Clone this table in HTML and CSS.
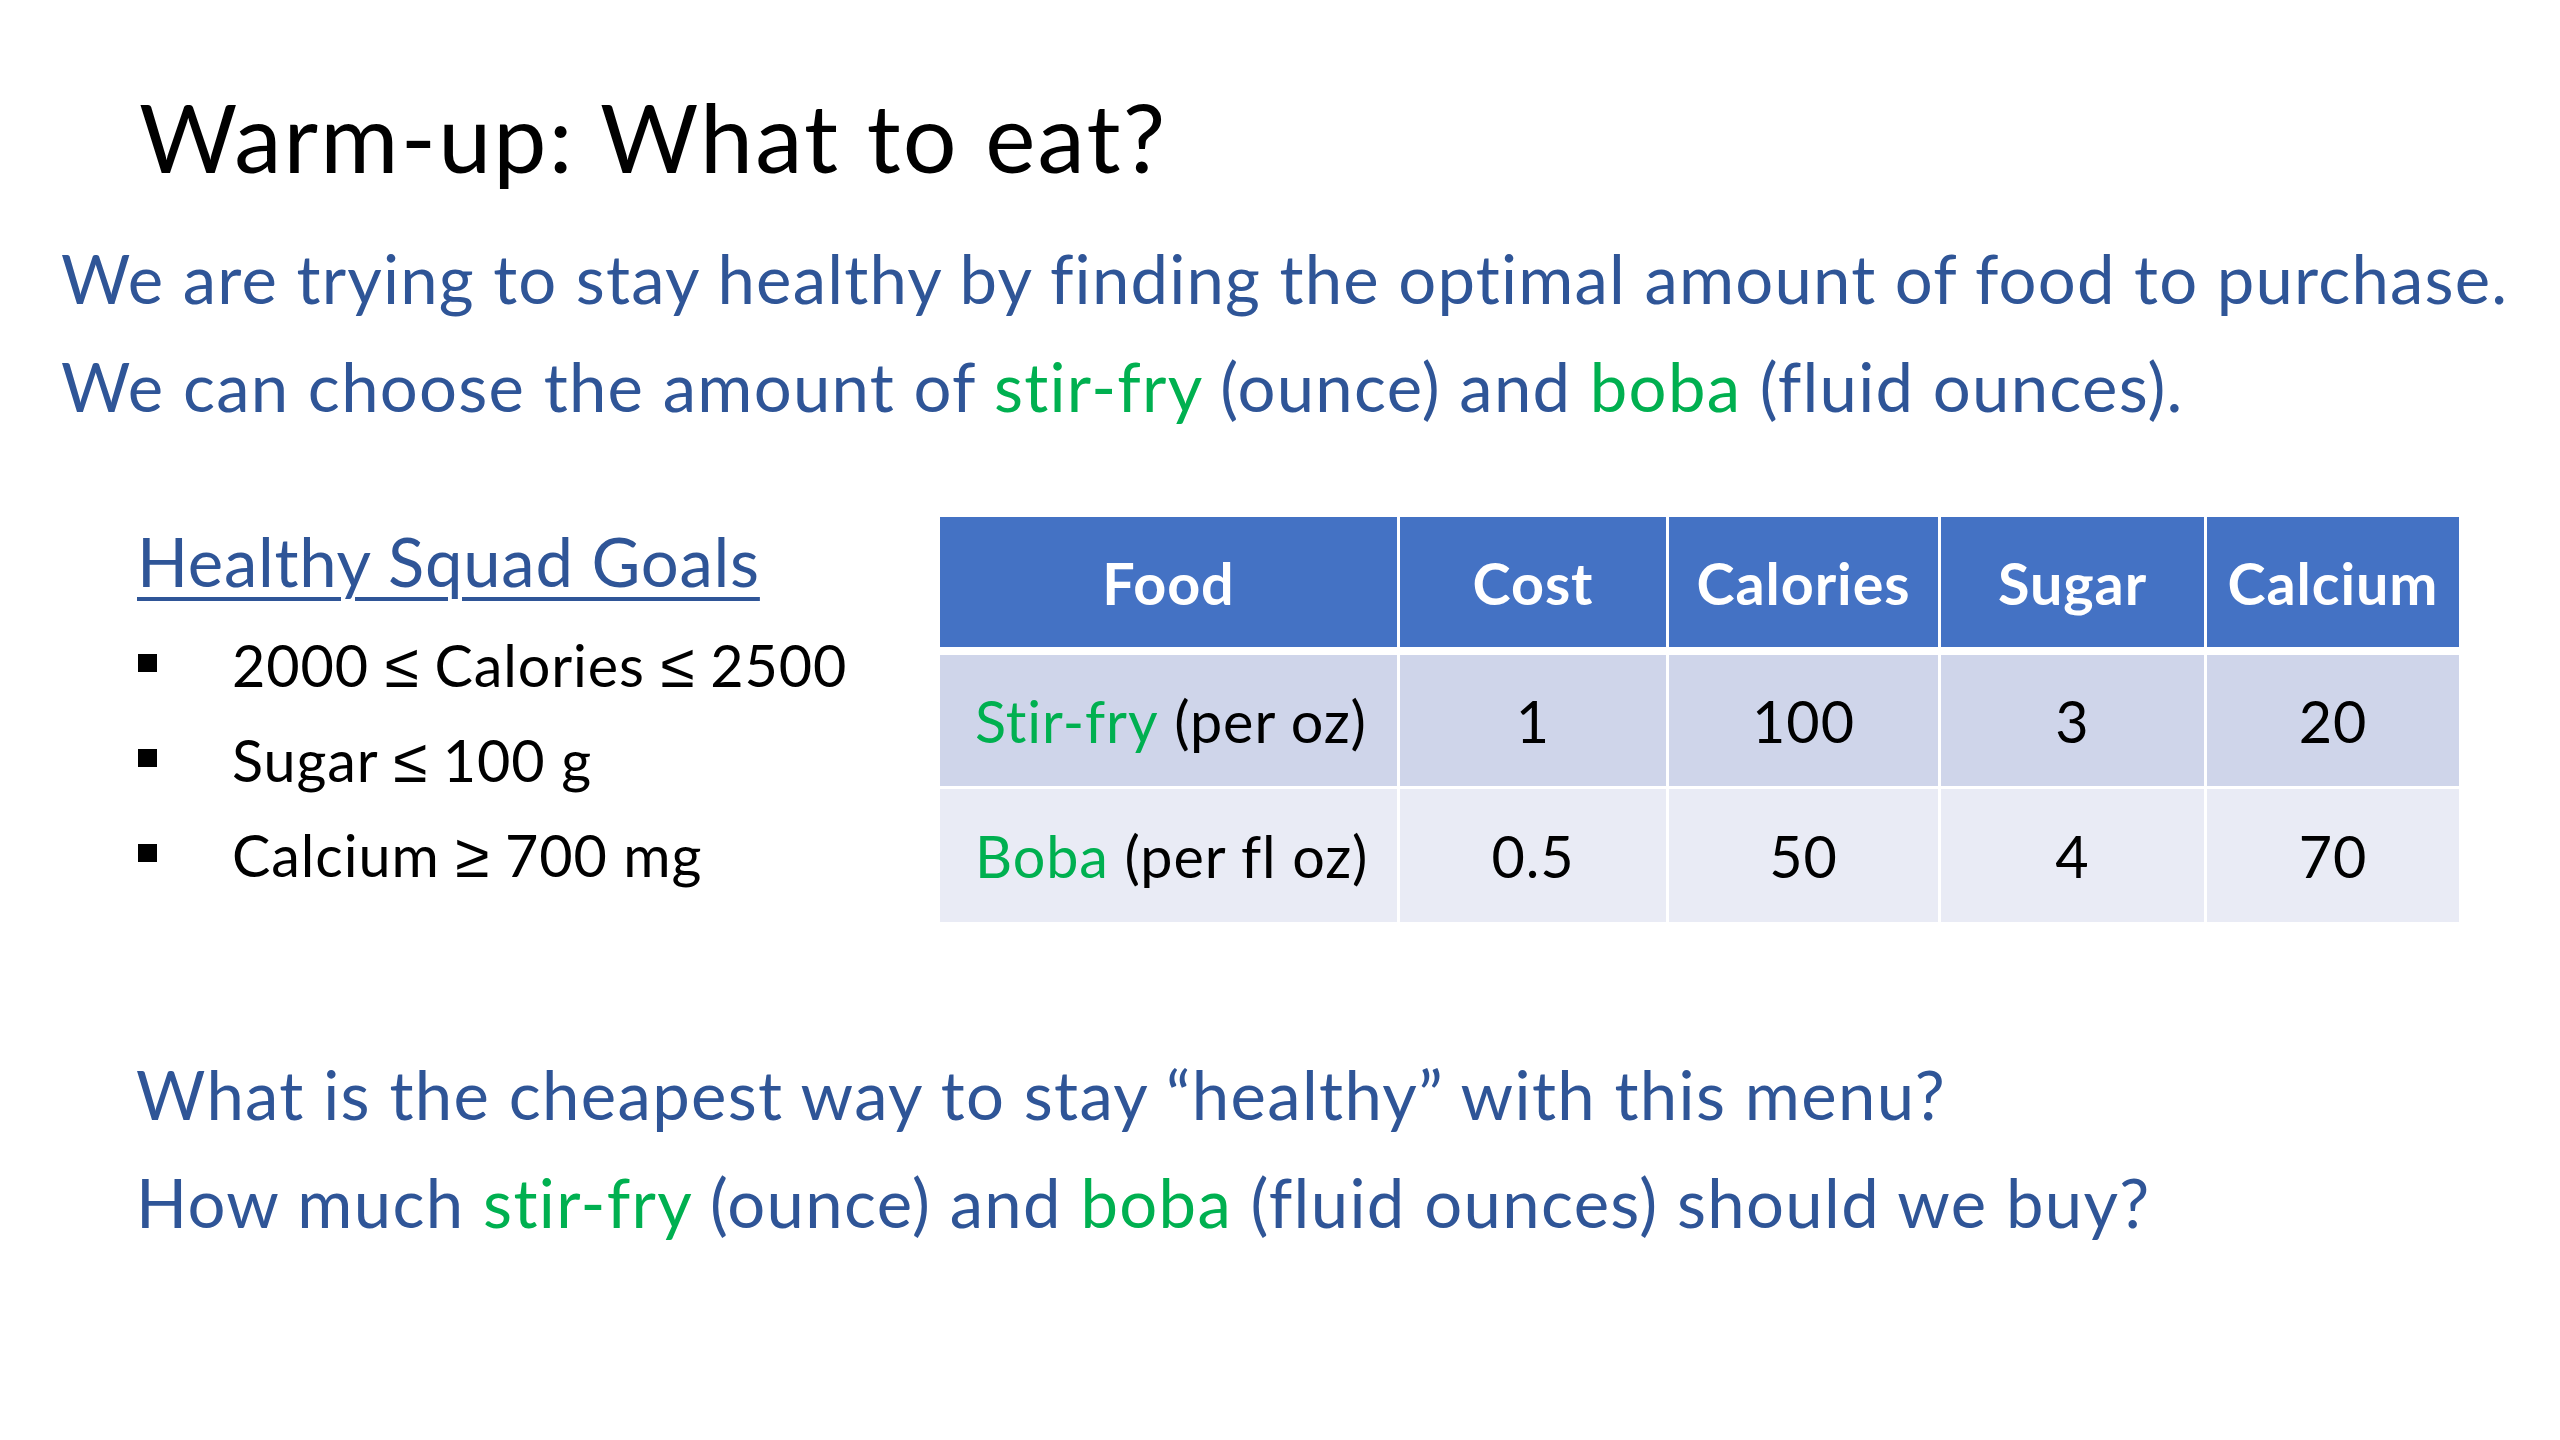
FILE: index.html
```html
<!DOCTYPE html>
<html lang="en">
<head>
<meta charset="utf-8">
<title>Warm-up: What to eat?</title>
<link rel="stylesheet" href="styles.css">
</head>
<body>
<div class="slide">
  <h1 class="title">Warm-up: What to eat?</h1>
  <div class="intro">
    <p class="l1">We are trying to stay healthy by finding the optimal amount of food to purchase.</p>
    <p>We can choose the amount of <span class="g">stir-fry</span> (ounce) and <span class="g">boba</span> (fluid ounces).</p>
  </div>
  <div class="middle">
    <div class="goals">
      <h2 class="goals-head">Healthy Squad Goals</h2>
      <ul class="goal-list">
        <li><span class="sq"></span><span>2000 <span class="op">≤</span> Calories <span class="op">≤</span> 2500</span></li>
        <li><span class="sq"></span><span>Sugar <span class="op">≤</span> 100 g</span></li>
        <li><span class="sq"></span><span>Calcium <span class="op">≥</span> 700 mg</span></li>
      </ul>
    </div>
    <div class="tbl">
      <div class="tr head">
        <div class="td">Food</div>
        <div class="td">Cost</div>
        <div class="td">Calories</div>
        <div class="td">Sugar</div>
        <div class="td">Calcium</div>
      </div>
      <div class="tr odd">
        <div class="td first"><span class="g">Stir-fry</span>&nbsp;(per oz)</div>
        <div class="td">1</div>
        <div class="td">100</div>
        <div class="td">3</div>
        <div class="td">20</div>
      </div>
      <div class="tr even">
        <div class="td first"><span class="g">Boba</span>&nbsp;(per fl oz)</div>
        <div class="td">0.5</div>
        <div class="td">50</div>
        <div class="td">4</div>
        <div class="td">70</div>
      </div>
    </div>
  </div>
  <div class="question">
    <p>What is the cheapest way to stay “healthy” with this menu?</p>
    <p>How much <span class="g">stir-fry</span> (ounce) and <span class="g">boba</span> (fluid ounces) should we buy?</p>
  </div>
</div>
</body>
</html>
```

FILE: styles.css
```css
* { box-sizing: border-box; }
html, body { margin: 0; padding: 0; background: #ffffff; }
body { font-family: Lato, "Open Sans", sans-serif; color: #000; }

.slide {
  width: 2560px;
  height: 1440px;
  overflow: hidden;
  background: #ffffff;
  padding-top: 76px;
}

.title {
  margin: 0;
  padding-left: 139px;
  font-size: 95px;
  font-weight: 400;
  line-height: 120px;
  letter-spacing: 0.023em;
  color: #000;
}

.intro {
  margin-top: 28px;
  padding-left: 61px;
  color: #2f5597;
  font-size: 67px;
  line-height: 108px;
  letter-spacing: 0.019em;
}
.intro .l1 { letter-spacing: 0.018em; }
.intro p, .question p { margin: 0; white-space: nowrap; }

.g { color: #00b050; }

.middle {
  display: flex;
  margin-top: 73px;
}

.goals {
  width: 940px;
  padding-left: 137px;
}

.goals-head {
  margin: 0;
  font-size: 67px;
  font-weight: 400;
  line-height: 96px;
  letter-spacing: 0.011em;
  color: #2f5597;
  text-decoration: underline;
  text-decoration-thickness: 4px;
  text-underline-offset: 10px;
  white-space: nowrap;
}

.goal-list {
  list-style: none;
  margin: 8px 0 0 0;
  padding: 0;
  font-size: 57.5px;
  line-height: 95px;
  letter-spacing: 0.016em;
}
.goal-list li {
  display: flex;
  align-items: center;
  white-space: nowrap;
}
.op {
  font-family: "Liberation Sans", "DejaVu Sans", sans-serif;
  font-size: 62px;
  line-height: 1;
  letter-spacing: 0;
}
.sq {
  width: 19px;
  height: 18px;
  background: #000;
  margin-left: 1px;
  margin-right: 75px;
  margin-bottom: 3px;
  flex: none;
}

.tbl {
  margin-top: 4px;
  width: 1519px;
  display: flex;
  flex-direction: column;
  font-size: 57.5px;
  letter-spacing: 0.016em;
}
.tr {
  display: grid;
  grid-template-columns: 457px 266px 269px 263px 252px;
  column-gap: 3px;
}
.td {
  display: flex;
  align-items: center;
  justify-content: center;
  white-space: nowrap;
}
.td.first { justify-content: flex-start; padding-left: 35px; }

.head { height: 130px; margin-bottom: 8px; }
.head .td { background: #4472c4; color: #fff; font-weight: 700; }
.odd { height: 131px; margin-bottom: 3px; }
.odd .td { background: #cfd5ea; }
.even { height: 133px; }
.even .td { background: #e9ebf5; }

.question {
  margin-top: 118px;
  padding-left: 136px;
  color: #2f5597;
  font-size: 67px;
  line-height: 108px;
  letter-spacing: 0.02em;
}
```
